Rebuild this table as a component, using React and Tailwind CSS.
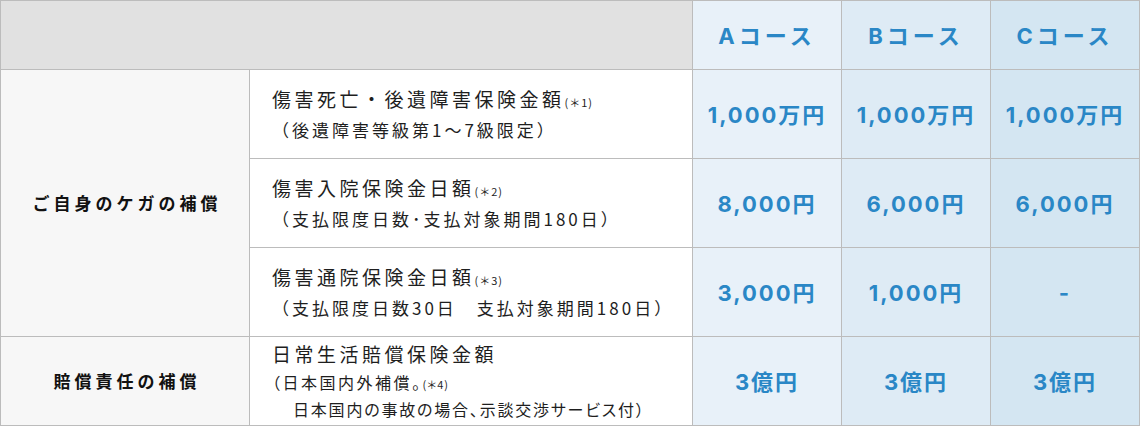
export default function App() {
  const font = { fontFamily: '"Noto Sans CJK JP", "Noto Sans", sans-serif' };
  const numFont = { fontFamily: 'Inter, "Noto Sans CJK JP", sans-serif' };
  const blue = "text-[#2a87c6] font-bold text-[22px] flex items-center justify-center pt-[3px]";
  const colA = "bg-[#e8f1f9]";
  const colB = "bg-[#deebf5]";
  const colC = "bg-[#d4e6f2]";
  const mid = "bg-white flex flex-col justify-center pl-[22px] text-[#1e1e1e] leading-[27px] whitespace-nowrap";
  const note = "text-[11px] tracking-[1px] align-baseline";
  const rows = [
    {
      l1: "傷害死亡・後遺障害保険金額",
      n: "(＊1)",
      l2: "（後遺障害等級第1〜7級限定）",
      v: ["1,000万円", "1,000万円", "1,000万円"],
    },
    {
      l1: "傷害入院保険金日額",
      n: "(＊2)",
      l2: "（支払限度日数･支払対象期間180日）",
      v: ["8,000円", "6,000円", "6,000円"],
    },
    {
      l1: "傷害通院保険金日額",
      n: "(＊3)",
      l2: "（支払限度日数30日　支払対象期間180日）",
      v: ["3,000円", "1,000円", "-"],
    },
  ];
  return (
    <div style={font} className="w-[1140px] h-[426px] bg-[#bcbcbc] p-px">
      <div className="grid grid-cols-[248px_442px_148px_148px_148px] grid-rows-[68px_88px_88px_88px_88px] gap-px w-full h-full">
        <div className="col-span-2 bg-[#e1e1e1]"></div>
        <div style={numFont} className={`${colA} ${blue} text-[21px] tracking-[4px]`}>Aコース</div>
        <div style={numFont} className={`${colB} ${blue} text-[21px] tracking-[4px]`}>Bコース</div>
        <div style={numFont} className={`${colC} ${blue} text-[21px] tracking-[4px]`}>Cコース</div>

        <div className="row-span-3 bg-[#f7f7f7] flex items-center justify-center font-bold text-[17px] tracking-[4px] text-[#111] pl-[4px]">
          ご自身のケガの補償
        </div>
        {rows.map((r, i) => (
          <Row key={i} r={r} mid={mid} note={note} blue={blue} numFont={numFont} cols={[colA, colB, colC]} />
        ))}

        <div className="bg-[#f7f7f7] flex items-center justify-center font-bold text-[17px] tracking-[4px] text-[#111] pl-[4px]">
          賠償責任の補償
        </div>
        <div className="bg-white flex flex-col justify-center pl-[22px] text-[#1e1e1e] whitespace-nowrap">
          <div className="text-[19px] tracking-[3.5px] leading-[28px]">日常生活賠償保険金額</div>
          <div className="text-[16px] tracking-[2.5px] leading-[25px] pt-[2px] [font-feature-settings:'palt']">
            （日本国内外補償。<span className={note}>(＊4)</span>
          </div>
          <div className="text-[16px] tracking-[1.8px] leading-[25px] pl-[21px] [font-feature-settings:'palt']">
            日本国内の事故の場合、示談交渉サービス付）
          </div>
        </div>
        <div style={numFont} className={`${colA} ${blue} tracking-[2px]`}>3億円</div>
        <div style={numFont} className={`${colB} ${blue} tracking-[2px]`}>3億円</div>
        <div style={numFont} className={`${colC} ${blue} tracking-[2px]`}>3億円</div>
      </div>
    </div>
  );
}

function Row({ r, mid, note, blue, numFont, cols }) {
  return (
    <>
      <div className={mid}>
        <div className="text-[19px] tracking-[3.5px]">
          {r.l1}
          <span className={note}>{r.n}</span>
        </div>
        <div className="text-[17px] tracking-[3px]">{r.l2}</div>
      </div>
      {r.v.map((v, j) => (
        <div key={j} style={numFont} className={`${cols[j]} ${blue} tracking-[2px]`}>
          {v}
        </div>
      ))}
    </>
  );
}
